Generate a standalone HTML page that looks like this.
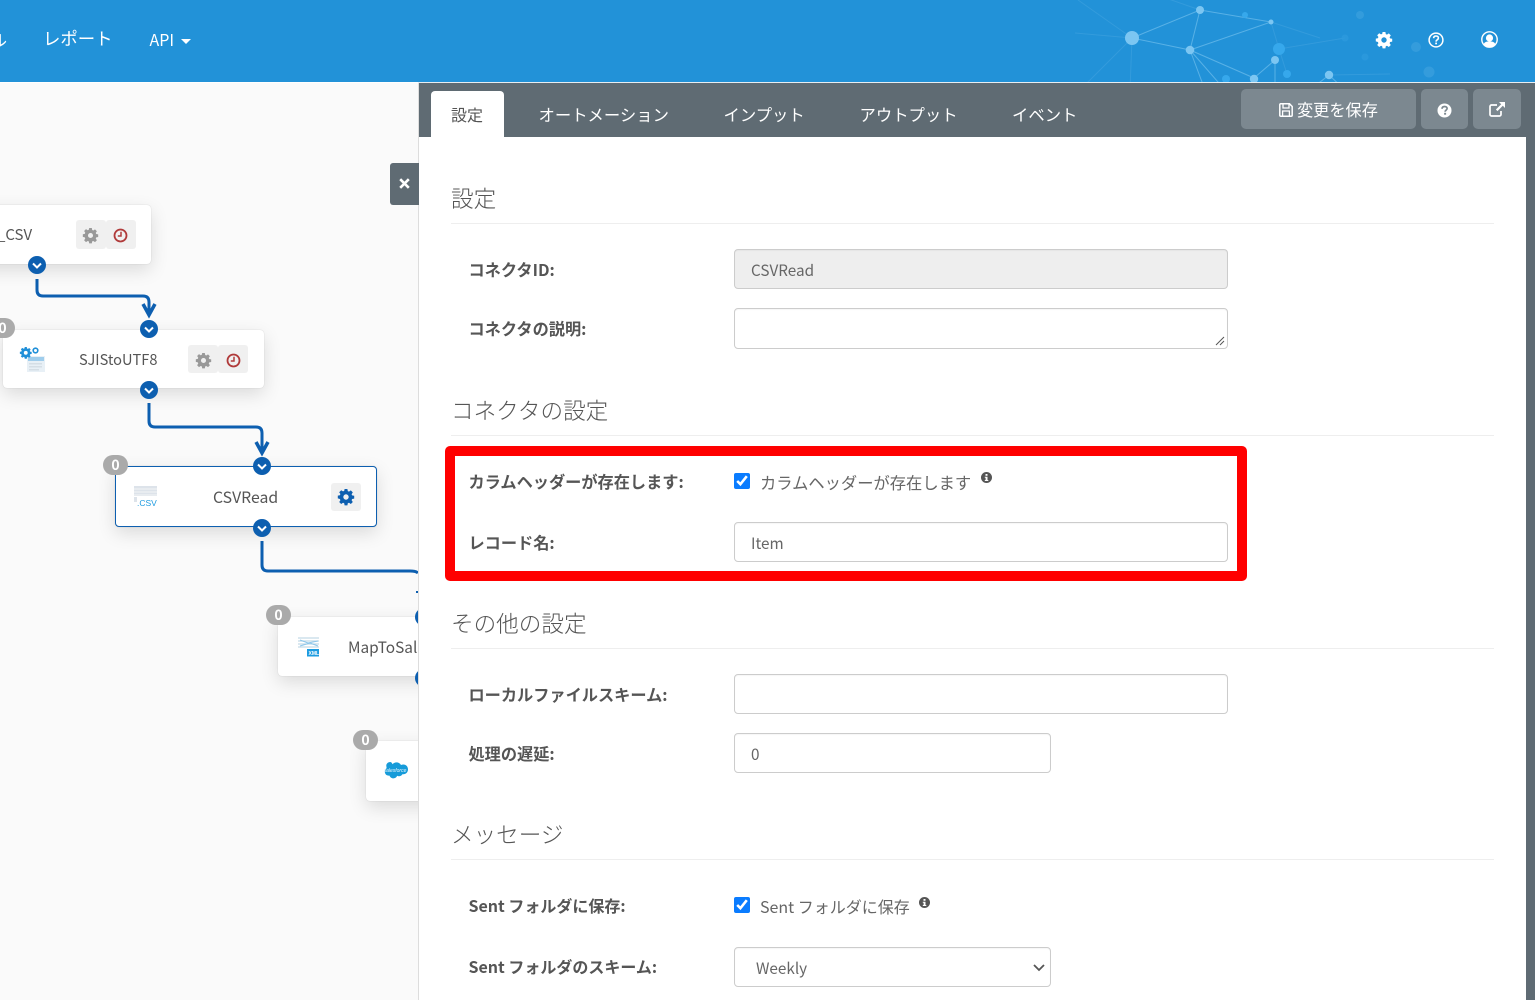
<!DOCTYPE html>
<html lang="ja">
<head>
<meta charset="utf-8">
<title>CSVRead</title>
<style>
html,body{margin:0;padding:0;width:1535px;height:1000px;overflow:hidden;background:#fff}
body{font-family:"Noto Sans CJK JP","Liberation Sans",sans-serif;color:#555;position:relative}
.a{position:absolute;white-space:nowrap}
#hdr{left:0;top:0;width:1535px;height:82px;background:#2292d8}
.nav{color:#fff;font-size:16px;line-height:24px;top:27px}
#left{left:0;top:83px;width:418px;height:917px;background:#fafafa;overflow:hidden;border-right:1px solid #ddd}
#bar{left:419px;top:83px;width:1116px;height:54px;background:#5f6b73}
#strip{left:1526px;top:137px;width:9px;height:863px;background:#5f6b73}
.tab{color:#fff;font-size:16.35px;line-height:24px;top:102px}
.btn{background:#7c8890;border-radius:5px;top:89px;height:40px}
h3{margin:0;position:absolute;left:451px;font-weight:300;font-size:22.6px;line-height:32px;color:#555;white-space:nowrap}
.hr{position:absolute;left:451px;width:1043px;height:1px;background:#eee}
.lb{position:absolute;left:468.500px;font-weight:700;font-size:16.2px;line-height:24px;color:#555;white-space:nowrap}
.in{position:absolute;left:734px;width:492px;height:38px;border:1px solid #ccc;border-radius:4px;background:#fff;font-size:15.3px;line-height:40px;color:#666;text-indent:16px;box-shadow:inset 0 1px 1px rgba(0,0,0,.04)}
.ck{position:absolute;left:734px;width:16px;height:16px;margin:0;accent-color:#0a7cff}
.ckl{position:absolute;font-size:16.3px;line-height:24px;color:#666;font-weight:400;white-space:nowrap}
.node{position:absolute;background:#fff;border-radius:4px;box-shadow:0 6px 18px rgba(0,0,0,.13),0 0 1px rgba(0,0,0,.2);box-sizing:border-box}
.nt{position:absolute;font-size:15px;line-height:22px;color:#555;white-space:nowrap}
.ib{position:absolute;background:#f0f0f0;border-radius:3px;width:30px}
.badge{position:absolute;background:#aaa;color:#fff;font-weight:700;font-size:14px;line-height:20px;text-align:center;width:25px;height:20px;border-radius:10px}
svg{position:absolute;overflow:visible}
</style>
</head>
<body>

<div class="a" id="hdr"></div>
<svg style="left:0;top:0" width="1535" height="82" viewBox="0 0 1535 82">
<defs><clipPath id="hc"><rect width="1535" height="82"/></clipPath></defs>
<g clip-path="url(#hc)">
<g stroke="#8fd0f5" fill="none" stroke-width="1" opacity=".5">
<path d="M1132 38L1200 10L1271 22M1132 38L1190 50L1200 10M1190 50L1271 22M1190 50L1254 78M1190 50L1205 90M1190 50L1225 90"/>
<path d="M1254 78L1275 60L1275 90M1329 75L1310 90M1329 75L1345 90"/>
</g>
<g stroke="#8fd0f5" fill="none" stroke-width="1" opacity=".16">
<path d="M1132 38L1130 90M1132 38L1085 85M1132 38L1078 0M1132 38L1075 33M1200 10L1160 -4M1279 49L1345 38M1271 22L1320 38M1279 49L1271 22M1279 49L1287 74M1329 75L1390 74"/>
</g>
<g fill="#7cc6f2">
<circle cx="1132" cy="38" r="7"/>
<circle cx="1200" cy="10" r="4"/>
<circle cx="1271" cy="22" r="2.500"/>
<circle cx="1190" cy="50" r="4.300"/>
<circle cx="1275" cy="60" r="4"/>
<circle cx="1254" cy="79" r="4.200"/>
<circle cx="1329" cy="75" r="4.200"/>
</g>
<g fill="#36a8ec">
<circle cx="1279" cy="49" r="6"/>
<circle cx="1245" cy="15" r="3"/>
<circle cx="1287" cy="74" r="4"/>
<circle cx="1226" cy="79" r="4"/>
</g>
<g fill="#5eb4e6" opacity=".3">
<circle cx="1360" cy="15" r="4"/>
<circle cx="1416" cy="47" r="5"/>
<circle cx="1429" cy="72" r="5.500"/>
</g>
<g fill="#2d9ade" opacity=".8">
<circle cx="1345" cy="38" r="3.500"/>
<circle cx="1365" cy="57" r="3.500"/>
</g>
</g>
</svg>
<div class="a nav" style="left:-9px">ル</div>
<div class="a nav" style="left:43px;font-size:17.400px">レポート</div>
<div class="a nav" style="left:149.500px">API</div>
<svg style="left:181px;top:38px" width="10" height="6"><path d="M0 1H10L5 6Z" fill="#fff"/></svg>

<svg style="left:1376px;top:32px" width="16" height="16" viewBox="0 0 16 16"><path fill="#fff" fill-rule="evenodd" d="M6.600 0h2.800l.4 2.100 1.200.5 1.800-1.200 2 2-1.200 1.800.5 1.200 2.100.4v2.800l-2.100.4-.5 1.200 1.200 1.800-2 2-1.800-1.200-1.200.5-.4 2.100H6.600l-.4-2.100-1.200-.5-1.800 1.200-2-2 1.200-1.800-.5-1.200L-.2 9.400V6.600l2.100-.4.5-1.200-1.200-1.800 2-2 1.800 1.200 1.200-.5zM8 5.300a2.700 2.700 0 1 0 0 5.400 2.700 2.700 0 0 0 0-5.400z"/></svg>
<svg style="left:1428px;top:32px" width="16" height="16" viewBox="0 0 16 16"><circle cx="8" cy="8" r="6.900" fill="none" stroke="#fff" stroke-width="1.500"/><path d="M5.600 6.200C5.700 4.700 6.700 4 8 4c1.400 0 2.400.8 2.400 2 0 1.800-2.300 1.800-2.300 3.600" fill="none" stroke="#fff" stroke-width="1.600"/><rect x="7.200" y="10.600" width="1.800" height="1.700" fill="#fff"/></svg>
<svg style="left:1481px;top:31px" width="17" height="17" viewBox="0 0 17 17"><circle cx="8.500" cy="8.500" r="7.700" fill="none" stroke="#fff" stroke-width="1.400"/><circle cx="8.500" cy="7" r="3.600" fill="#fff"/><path d="M2.500 13.400C3.700 10.700 6 10.400 8.500 10.400s4.800.3 6 3c-1.400 1.900-3.600 2.900-6 2.900s-4.600-1-6-2.900z" fill="#fff"/></svg>

<div class="a" id="left"></div>
<div class="a" style="left:0;top:83px;width:418px;height:917px;overflow:hidden">
  <svg style="left:0;top:-83px" width="418" height="1000" viewBox="0 0 418 1000">
    <g fill="none" stroke="#0d5fb0" stroke-width="3">
      <path d="M37 279V290Q37 296 43 296H143Q149 296 149 302V314"/>
      <path d="M143 304L149 315L155 304" stroke-width="3.500"/>
      <path d="M149 403V421Q149 427 155 427H256Q262 427 262 433V452"/>
      <path d="M256 442L262 453L268 442" stroke-width="3.500"/>
      <path d="M262 541V565Q262 571 268 571H410Q416 571 418 573"/>
    </g>
    <rect x="416" y="591" width="2" height="2" fill="#0d5fb0"/>
  </svg>

  <div class="node" style="left:-120px;top:122px;width:271px;height:59px">
    <div class="nt" style="left:117px;top:19px">_CSV</div>
    <div class="ib" style="left:196px;top:15px;height:29px"></div>
    <div class="ib" style="left:226px;top:15px;height:29px"></div>
    <svg style="left:203px;top:23px" width="15" height="15" viewBox="0 0 16 16"><path fill="#999" fill-rule="evenodd" d="M6.600 0h2.800l.4 2.100 1.200.5 1.800-1.200 2 2-1.200 1.800.5 1.200 2.100.4v2.800l-2.100.4-.5 1.200 1.200 1.800-2 2-1.800-1.200-1.200.5-.4 2.100H6.600l-.4-2.100-1.200-.5-1.800 1.200-2-2 1.200-1.800-.5-1.200L-.2 9.400V6.600l2.100-.4.5-1.200-1.200-1.800 2-2 1.800 1.200 1.200-.5zM8 5.300a2.700 2.700 0 1 0 0 5.400 2.700 2.700 0 0 0 0-5.400z"/></svg>
    <svg style="left:233px;top:23px" width="15" height="15" viewBox="0 0 15 15"><circle cx="7.500" cy="7.500" r="6" fill="none" stroke="#b03a3a" stroke-width="1.800"/><path d="M8 3.800V8H4.800" fill="none" stroke="#b03a3a" stroke-width="1.500"/></svg>
  </div>

  <div class="node" style="left:3px;top:247px;width:261px;height:58px">
    <div class="nt" style="left:76px;top:19px;font-size:14.600px">SJIStoUTF8</div>
    <div class="ib" style="left:185px;top:15px;height:28px"></div>
    <div class="ib" style="left:215px;top:15px;height:28px"></div>
    <svg style="left:193px;top:23px" width="15" height="15" viewBox="0 0 16 16"><path fill="#999" fill-rule="evenodd" d="M6.600 0h2.800l.4 2.100 1.200.5 1.800-1.200 2 2-1.200 1.800.5 1.200 2.100.4v2.800l-2.100.4-.5 1.200 1.200 1.800-2 2-1.800-1.200-1.200.5-.4 2.100H6.600l-.4-2.100-1.200-.5-1.800 1.200-2-2 1.200-1.800-.5-1.200L-.2 9.400V6.600l2.100-.4.5-1.200-1.200-1.800 2-2 1.800 1.200 1.200-.5zM8 5.300a2.700 2.700 0 1 0 0 5.400 2.700 2.700 0 0 0 0-5.400z"/></svg>
    <svg style="left:223px;top:23px" width="15" height="15" viewBox="0 0 15 15"><circle cx="7.500" cy="7.500" r="6" fill="none" stroke="#b03a3a" stroke-width="1.800"/><path d="M8 3.800V8H4.800" fill="none" stroke="#b03a3a" stroke-width="1.500"/></svg>
    <svg style="left:17px;top:17px" width="26" height="26" viewBox="0 0 26 26">
      <rect x="7" y="9" width="18" height="16" fill="#e8f0f6"/>
      <rect x="8" y="10" width="16" height="4" fill="#9fcdec"/>
      <rect x="9" y="16" width="13" height="1.500" fill="#d5dee5"/><rect x="9" y="19" width="13" height="1.500" fill="#d5dee5"/><rect x="9" y="22" width="10" height="1.500" fill="#d5dee5"/>
      <g transform="translate(0,0) scale(.72)"><path fill="#1f8fd8" fill-rule="evenodd" d="M6.600 0h2.800l.4 2.100 1.200.5 1.800-1.200 2 2-1.200 1.800.5 1.200 2.100.4v2.800l-2.100.4-.5 1.200 1.200 1.800-2 2-1.800-1.200-1.200.5-.4 2.100H6.600l-.4-2.100-1.200-.5-1.800 1.200-2-2 1.200-1.800-.5-1.200L-.2 9.400V6.600l2.100-.4.5-1.200-1.200-1.800 2-2 1.800 1.200 1.200-.5zM8 5.300a2.700 2.700 0 1 0 0 5.400 2.700 2.700 0 0 0 0-5.400z"/></g>
      <circle cx="15.500" cy="3.500" r="2.300" fill="none" stroke="#1f8fd8" stroke-width="1.600"/>
    </svg>
  </div>
  <div class="badge" style="left:-10px;top:235px">0</div>

  <div class="node" style="left:115px;top:383px;width:262px;height:61px;border:1px solid #0d5fb0">
    <div class="nt" style="left:97px;top:19px;font-size:15.800px">CSVRead</div>
    <div class="ib" style="left:215px;top:16px;height:28px"></div>
    <svg style="left:222px;top:22px" width="16" height="16" viewBox="0 0 16 16"><path fill="#0d5fb0" fill-rule="evenodd" d="M6.600 0h2.800l.4 2.100 1.200.5 1.800-1.200 2 2-1.200 1.800.5 1.200 2.100.4v2.800l-2.100.4-.5 1.200 1.200 1.800-2 2-1.800-1.200-1.200.5-.4 2.100H6.600l-.4-2.100-1.200-.5-1.800 1.200-2-2 1.200-1.800-.5-1.200L-.2 9.400V6.600l2.100-.4.5-1.200-1.200-1.800 2-2 1.800 1.200 1.200-.5zM8 5.300a2.700 2.700 0 1 0 0 5.400 2.700 2.700 0 0 0 0-5.400z"/></svg>
    <svg style="left:18px;top:19px" width="24" height="21" viewBox="0 0 24 21">
      <rect x="0" y="0" width="23" height="10" fill="#dde3ea"/>
      <path d="M0 3H23M0 6H23M0 9H23" stroke="#f2f4f7" stroke-width="1"/>
      <rect x="0" y="11" width="3" height="5" fill="#dde3ea"/>
      <text x="3" y="20" font-family="'Liberation Sans',sans-serif" font-size="8.500" fill="#1f9be0">.CSV</text>
    </svg>
  </div>
  <div class="badge" style="left:103px;top:372px">0</div>

  <div class="node" style="left:278px;top:534px;width:260px;height:59px">
    <div class="nt" style="left:70px;top:19px;font-size:15.400px">MapToSal</div>
    <svg style="left:20px;top:20px" width="22" height="20" viewBox="0 0 22 20">
      <path d="M0 1H21M0 4H21M0 7H21M0 10H21" stroke="#c4d9e8" stroke-width="1.200"/>
      <path d="M2 3L10 6L20 4M2 9L12 6L20 9" stroke="#8cc6ea" stroke-width="1" fill="none"/>
      <rect x="9" y="12" width="12" height="7.500" fill="#1c9be0"/>
      <text x="10.500" y="18" font-family="'Liberation Sans',sans-serif" font-size="5" font-weight="700" fill="#fff">XML</text>
    </svg>
  </div>
  <div class="badge" style="left:266px;top:522px">0</div>

  <div class="node" style="left:366px;top:658px;width:260px;height:60px">
    <svg style="left:16px;top:21px" width="26" height="19" viewBox="0 0 26 19">
      <path fill="#169bd9" d="M10.600 2.300C11.600 1 13 .4 14.500.4c2 0 3.600 1 4.500 2.600.8-.4 1.600-.5 2.400-.5 2.700 0 4.600 2.200 4.600 4.900s-2 4.900-4.600 4.900c-.4 0-.7 0-1-.1-.7 1.200-2 2-3.500 2-.6 0-1.200-.1-1.700-.4-.6 1.500-2.100 2.600-3.800 2.600-1.800 0-3.400-1.200-4-2.900-.3.100-.5.100-.8.100-2.200 0-3.800-1.800-3.800-4 0-1.500.8-2.800 1.900-3.500-.2-.5-.3-1-.3-1.600C3.800 2.100 5.800 0 8.300 0c.9 0 1.700.9 2.300 2.300z"/>
      <text x="13" y="10" text-anchor="middle" font-family="'Liberation Sans',sans-serif" font-size="5" font-style="italic" fill="#e8f6fd">salesforce</text>
    </svg>
  </div>
  <div class="badge" style="left:353px;top:647px">0</div>

  <svg style="left:0;top:-83px" width="440" height="1000" viewBox="0 0 440 1000">
    <g fill="#0d5fb0">
      <circle cx="37" cy="265" r="9"/>
      <circle cx="149" cy="329" r="9"/>
      <circle cx="149" cy="390" r="9"/>
      <circle cx="262" cy="466" r="9"/>
      <circle cx="262" cy="528" r="9"/>
      <circle cx="424" cy="617" r="9"/>
      <circle cx="424" cy="678" r="9"/>
    </g>
    <g fill="none" stroke="#fff" stroke-width="2">
      <path d="M33 263.500L37 267.500L41 263.500"/>
      <path d="M145 327.500L149 331.500L153 327.500"/>
      <path d="M145 388.500L149 392.500L153 388.500"/>
      <path d="M258 464.500L262 468.500L266 464.500"/>
      <path d="M258 526.500L262 530.500L266 526.500"/>
    </g>
  </svg>
</div>

<div class="a" style="left:390px;top:163px;width:29px;height:42px;background:#5f6b73;border-radius:3px 0 0 3px"></div>
<svg style="left:399px;top:178px" width="11" height="11" viewBox="0 0 11 11"><path d="M1.200 1.200L9.800 9.800M9.800 1.200L1.200 9.800" stroke="#fff" stroke-width="2.600"/></svg>

<div class="a" style="left:418px;top:82px;width:1117px;height:1px;background:#e8eef2"></div>
<div class="a" id="bar"></div>
<div class="a" id="strip"></div>
<div class="a" style="left:431px;top:91px;width:73px;height:46px;background:#fff;border-radius:4px 4px 0 0"></div>
<div class="a" style="left:451px;top:102px;font-size:16px;line-height:24px;color:#555">設定</div>
<div class="a tab" style="left:538.500px">オートメーション</div>
<div class="a tab" style="left:723.500px">インプット</div>
<div class="a tab" style="left:859.500px">アウトプット</div>
<div class="a tab" style="left:1012px">イベント</div>

<div class="a btn" style="left:1241px;width:175px"></div>
<div class="a btn" style="left:1421px;width:47px"></div>
<div class="a btn" style="left:1473px;width:48px"></div>
<svg style="left:1279px;top:103px" width="14" height="14" viewBox="0 0 14 14"><path d="M1.700.8H10.500L13.200 3.500V12.300a.9.900 0 0 1-.9.900H1.700a.9.900 0 0 1-.9-.9V1.700a.9.900 0 0 1 .9-.9z" fill="none" stroke="#fff" stroke-width="1.500"/><path d="M4 1V5H10V1" fill="none" stroke="#fff" stroke-width="1.300"/><path d="M3.600 13V8H10.400V13" fill="none" stroke="#fff" stroke-width="1.300"/></svg>
<div class="a" style="left:1297px;top:97px;font-size:16.200px;line-height:24px;color:#fff">変更を保存</div>
<svg style="left:1437px;top:103px" width="15" height="15" viewBox="0 0 15 15"><circle cx="7.500" cy="7.500" r="7" fill="#fff"/><path d="M5 5.800C5.100 4.300 6.200 3.500 7.600 3.500c1.500 0 2.500.9 2.500 2 0 1.700-2 1.700-2 3.200" fill="none" stroke="#7c8890" stroke-width="1.700"/><rect x="7.100" y="9.800" width="2" height="1.900" fill="#7c8890"/></svg>
<svg style="left:1489px;top:102px" width="16" height="15" viewBox="0 0 16 15"><path d="M8 3H2.500A1.500 1.500 0 0 0 1 4.500v8A1.500 1.500 0 0 0 2.500 14h8a1.500 1.500 0 0 0 1.500-1.500V9" fill="none" stroke="#fff" stroke-width="1.700"/><path d="M10 0h6v6l-2.200-2.200-5.300 5.300-1.600-1.600 5.300-5.300z" fill="#fff"/></svg>

<h3 style="top:182px">設定</h3>
<div class="hr" style="top:223px"></div>

<div class="lb" style="top:257px">コネクタID:</div>
<div class="in" style="top:249px;background:#eee">CSVRead</div>
<div class="lb" style="top:316px">コネクタの説明:</div>
<div class="in" style="top:308px;height:39px"></div>
<svg style="left:1215px;top:336px" width="10" height="10"><path d="M1 9L9 1M5 9L9 5" stroke="#555" stroke-width="1"/></svg>

<h3 style="top:394px">コネクタの設定</h3>
<div class="hr" style="top:435px"></div>

<div class="a" style="left:445px;top:446px;width:782px;height:115px;border:10px solid #f00;border-radius:5px"></div>
<div class="lb" style="top:469px">カラムヘッダーが存在します:</div>
<input class="ck" type="checkbox" checked style="top:473px">
<div class="ckl" style="left:760px;top:470px">カラムヘッダーが存在します</div>
<svg style="left:981px;top:472px" width="11" height="11" viewBox="0 0 11 11"><circle cx="5.500" cy="5.500" r="5.500" fill="#555"/><rect x="4.500" y="2" width="2" height="1.800" fill="#fff"/><path d="M3.800 4.700H6.500V8H7.300V9H3.800V8H4.600V5.700H3.800z" fill="#fff"/></svg>
<div class="lb" style="top:530px">レコード名:</div>
<div class="in" style="top:522px">Item</div>

<h3 style="top:607px">その他の設定</h3>
<div class="hr" style="top:648px"></div>

<div class="lb" style="top:682px">ローカルファイルスキーム:</div>
<div class="in" style="top:674px"></div>
<div class="lb" style="top:741px">処理の遅延:</div>
<div class="in" style="top:733px;width:315px">0</div>

<h3 style="top:818px">メッセージ</h3>
<div class="hr" style="top:859px"></div>

<div class="lb" style="top:893px;font-size:16px">Sent フォルダに保存:</div>
<input class="ck" type="checkbox" checked style="top:897px">
<div class="ckl" style="left:760px;top:894px;font-size:16px">Sent フォルダに保存</div>
<svg style="left:919px;top:897px" width="11" height="11" viewBox="0 0 11 11"><circle cx="5.500" cy="5.500" r="5.500" fill="#555"/><rect x="4.500" y="2" width="2" height="1.800" fill="#fff"/><path d="M3.800 4.700H6.500V8H7.300V9H3.800V8H4.600V5.700H3.800z" fill="#fff"/></svg>
<div class="lb" style="top:954px;font-size:16px">Sent フォルダのスキーム:</div>
<div class="in" style="top:947px;width:315px;text-indent:21px">Weekly</div>
<svg style="left:1033px;top:964px" width="12" height="7"><path d="M1 1L6 6L11 1" fill="none" stroke="#555" stroke-width="1.800"/></svg>

</body>
</html>
